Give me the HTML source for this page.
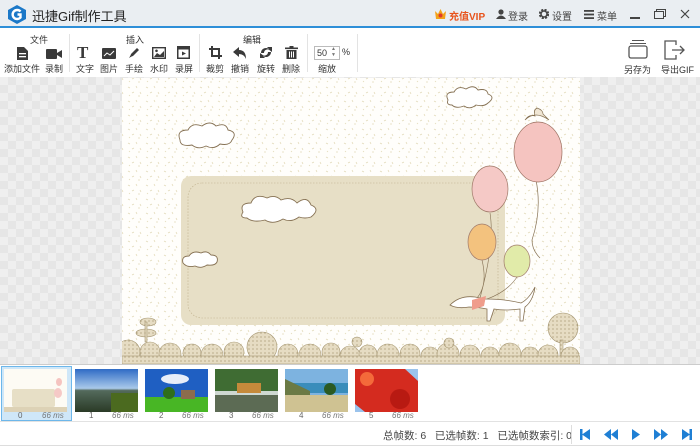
<!DOCTYPE html>
<html><head><meta charset="utf-8"><style>
*{margin:0;padding:0;box-sizing:border-box}
body{width:700px;height:446px;overflow:hidden;font-family:"Liberation Sans","Noto Sans CJK SC",sans-serif;font-size:10px;color:#333;background:#fff;position:relative}
.abs{position:absolute}
.title{left:0;top:0;width:700px;height:28px;background:#eaeef2;border-bottom:2px solid #2e8fd8}
.tb{top:30px;left:0;width:700px;height:47px;background:#fff}
.lbl{position:absolute;font-size:9px;color:#333;white-space:nowrap}
.ico{position:absolute}
.sep{position:absolute;top:34px;width:1px;height:38px;background:#e3e3e3}
.canvas{left:0;top:77px;width:700px;height:287px;background-color:#efefef;background-image:linear-gradient(45deg,#e6e6e6 25%,transparent 25%,transparent 75%,#e6e6e6 75%),linear-gradient(45deg,#e6e6e6 25%,transparent 25%,transparent 75%,#e6e6e6 75%);background-size:16px 16px;background-position:0 0,8px 8px}
.film{left:0;top:364px;width:700px;height:58px;background:#fff;border-top:1px solid #ccc;border-bottom:1px solid #e2e2e2}
.th{position:absolute;top:4px;width:63px;height:43px}
.fn{position:absolute;top:46px;font-size:8px;color:#666}
.fm{position:absolute;top:46px;font-size:8px;color:#777;font-style:italic}
.status{left:0;top:423px;width:700px;height:23px;background:#fff;border-bottom:1px solid #ddd}
</style></head><body>
<div class="abs title">
 <svg class="abs" style="left:8px;top:5px" width="18" height="19" viewBox="0 0 18 19"><polygon points="9,0 18,5 18,14 9,19 0,14 0,5" fill="#1b78c8"/><path d="M12.5 6.5 A4.5 4.5 0 1 0 12.5 12.5 L12.5 9.5 L9.5 9.5" fill="none" stroke="#fff" stroke-width="2.4"/></svg>
 <div class="abs" style="left:32px;top:6px;font-size:13px;color:#222">迅捷Gif制作工具</div>
 <svg class="abs" style="left:434px;top:8px" width="13" height="12" viewBox="0 0 13 12"><path d="M1 3 L4 6 L6.5 1 L9 6 L12 3 L11 11 H2 Z" fill="#f3a21a"/><circle cx="6.5" cy="7.5" r="2" fill="#e03a2a"/></svg>
 <div class="abs" style="left:449px;top:8px;font-size:10px;color:#e8521b;font-weight:bold">充值VIP</div>
 <svg class="abs" style="left:496px;top:9px" width="10" height="10"><circle cx="5" cy="3" r="2.6" fill="#444"/><path d="M0 10 Q5 3 10 10Z" fill="#444"/></svg>
 <div class="abs" style="left:508px;top:8px;font-size:10px;color:#444">登录</div>
 <svg class="abs" style="left:539px;top:9px" width="10" height="10" viewBox="0 0 10 10"><circle cx="5" cy="5" r="4" fill="none" stroke="#444" stroke-width="2.4" stroke-dasharray="2 1.2"/><circle cx="5" cy="5" r="3" fill="none" stroke="#444" stroke-width="1.5"/></svg>
 <div class="abs" style="left:552px;top:8px;font-size:10px;color:#444">设置</div>
 <svg class="abs" style="left:584px;top:10px" width="10" height="9"><rect y="0" width="10" height="1.8" fill="#444"/><rect y="3.6" width="10" height="1.8" fill="#444"/><rect y="7.2" width="10" height="1.8" fill="#444"/></svg>
 <div class="abs" style="left:597px;top:8px;font-size:10px;color:#444">菜单</div>
 <div class="abs" style="left:630px;top:17px;width:10px;height:1.5px;background:#444"></div>
 <svg class="abs" style="left:654px;top:9px" width="12" height="10"><rect x="0.5" y="2.5" width="9" height="7" fill="none" stroke="#444"/><path d="M2.5 2.5V0.5H11.5V7.5H9.5" fill="none" stroke="#444"/></svg>
 <svg class="abs" style="left:680px;top:9px" width="10" height="10"><path d="M1 1L9 9M9 1L1 9" stroke="#444" stroke-width="1.2"/></svg>
</div>
<div class="abs tb"></div>
<div class="lbl" style="left:30px;top:33px">文件</div>
<div class="lbl" style="left:126px;top:33px">插入</div>
<div class="lbl" style="left:243px;top:33px">编辑</div>
<div class="sep" style="left:69px"></div><div class="sep" style="left:199px"></div><div class="sep" style="left:307px"></div><div class="sep" style="left:357px"></div>
<svg class="ico" style="left:17px;top:47px" width="11" height="13"><path d="M0 0H7L11 4V13H0Z" fill="#3a3a3a"/><rect x="2" y="6" width="7" height="1.3" fill="#fff"/><rect x="2" y="9" width="7" height="1.3" fill="#fff"/></svg>
<svg class="ico" style="left:46px;top:49px" width="16" height="10"><rect width="11" height="10" rx="1" fill="#3a3a3a"/><path d="M11 4L16 1V9L11 6Z" fill="#3a3a3a"/></svg>
<div class="abs" style="left:77px;top:43px;font-family:'Liberation Serif',serif;font-size:17px;font-weight:bold;color:#3a3a3a">T</div>
<svg class="ico" style="left:102px;top:48px" width="14" height="11"><rect width="14" height="11" rx="1" fill="#3a3a3a"/><path d="M2 8L5 5L8 7L12 3" stroke="#fff" fill="none"/></svg>
<svg class="ico" style="left:128px;top:46px" width="13" height="13"><path d="M2 11L3 8L9 2L11 4L5 10Z" fill="#3a3a3a"/><path d="M1 12L2.5 9.5L3.5 10.5Z" fill="#3a3a3a"/></svg>
<svg class="ico" style="left:152px;top:47px" width="14" height="12"><rect x="0.7" y="0.7" width="12.6" height="10.6" fill="none" stroke="#3a3a3a" stroke-width="1.4"/><path d="M2 10L5 6L8 8L12 4V10Z" fill="#3a3a3a"/><circle cx="4.5" cy="3.8" r="1.3" fill="#3a3a3a"/></svg>
<svg class="ico" style="left:177px;top:46px" width="13" height="13"><rect width="13" height="13" fill="#3a3a3a"/><rect x="1.5" y="3.5" width="10" height="8" fill="#fff"/><path d="M5 5.5L9 7.5L5 9.5Z" fill="#3a3a3a"/></svg>
<svg class="ico" style="left:209px;top:46px" width="13" height="13"><path d="M3 0V10H13M0 3H10V13" fill="none" stroke="#3a3a3a" stroke-width="2"/></svg>
<svg class="ico" style="left:233px;top:47px" width="14" height="12"><path d="M6 0L0 5L6 10V7Q11 7 13 12Q13 3 6 3Z" fill="#3a3a3a"/></svg>
<svg class="ico" style="left:259px;top:46px" width="14" height="13"><path d="M2 7A5 5 0 0 1 10 3L8 1H13V6L11 4.5A3.5 3.5 0 0 0 5 7Z" fill="#3a3a3a"/><path d="M12 6A5 5 0 0 1 4 10L6 12H1V7L3 8.5A3.5 3.5 0 0 0 9 6Z" fill="#3a3a3a"/></svg>
<svg class="ico" style="left:285px;top:46px" width="13" height="13"><rect x="0" y="1.5" width="13" height="1.6" fill="#3a3a3a"/><rect x="4.5" y="0" width="4" height="2" fill="#3a3a3a"/><path d="M1.5 4H11.5V13H1.5Z" fill="#3a3a3a"/><path d="M4.5 5.5V11.5M6.5 5.5V11.5M8.5 5.5V11.5" stroke="#fff"/></svg>
<div class="abs" style="left:314px;top:46px;width:26px;height:14px;border:1px solid #bbb;font-size:9px;padding:1px 0 0 2px">50</div>
<div class="abs" style="left:331px;top:46px;font-size:5px;color:#777;line-height:6px">▲<br>▼</div>
<div class="lbl" style="left:342px;top:47px">%</div>
<div class="lbl" style="left:4px;top:62px">添加文件</div><div class="lbl" style="left:45px;top:62px">录制</div>
<div class="lbl" style="left:76px;top:62px">文字</div><div class="lbl" style="left:100px;top:62px">图片</div><div class="lbl" style="left:125px;top:62px">手绘</div><div class="lbl" style="left:150px;top:62px">水印</div><div class="lbl" style="left:175px;top:62px">录屏</div>
<div class="lbl" style="left:206px;top:62px">裁剪</div><div class="lbl" style="left:231px;top:62px">撤销</div><div class="lbl" style="left:257px;top:62px">旋转</div><div class="lbl" style="left:282px;top:62px">删除</div><div class="lbl" style="left:318px;top:62px">缩放</div>
<svg class="ico" style="left:628px;top:39px" width="20" height="20"><path d="M4 1.5H16M2 4.5H18" stroke="#555"/><rect x="1" y="7" width="18" height="12" rx="2" fill="none" stroke="#555" stroke-width="1.3"/></svg>
<svg class="ico" style="left:664px;top:40px" width="22" height="20"><path d="M12 5V1H1V19H12V15" fill="none" stroke="#555" stroke-width="1.3"/><path d="M8 10H20M16 6L20 10L16 14" fill="none" stroke="#555" stroke-width="1.3"/></svg>
<div class="lbl" style="left:624px;top:63px">另存为</div><div class="lbl" style="left:661px;top:63px">导出GIF</div>
<div class="abs canvas"></div>
<svg class="abs" style="left:122px;top:78px" width="458" height="286" viewBox="122 78 458 286">
 <defs><pattern id="sp" width="18" height="14" patternUnits="userSpaceOnUse"><path d="M2 3l2 1M10 2l1 2M6 9l2-1M14 8l1 2M3 12l1-1M12 12l2 0" stroke="#e2d9b8" stroke-width="0.8"/></pattern>
 <pattern id="tr" width="4" height="4" patternUnits="userSpaceOnUse"><rect width="4" height="4" fill="#e6dcc3"/><circle cx="1" cy="1" r="0.6" fill="#9c8c66"/></pattern></defs>
 <rect x="122" y="78" width="458" height="286" fill="#fffefb"/>
 <rect x="122" y="78" width="458" height="286" fill="url(#sp)"/>
 <rect x="181" y="176" width="324" height="149" rx="10" fill="#e7dfc6"/>
 <rect x="188" y="183" width="310" height="135" rx="14" fill="none" stroke="#bfb08c" stroke-width="0.6" stroke-dasharray="1.5 1.5"/>
 <g fill="#fff" stroke="#857052" stroke-width="0.9">
  <path d="M180 140q-4-10 8-10q4-8 14-4q8-6 14 0q10-4 12 4q10 2 4 10q-2 6-12 4q-6 6-14 2q-8 4-14-1q-12 2-12-5z"/>
  <path d="M448 100q-4-8 6-8q4-7 12-3q8-5 12 1q9-2 10 4q8 3 0 9q-4 4-12 2q-6 5-12 1q-8 3-12-1q-6 0-4-5z"/>
  <path d="M243 212q-4-9 8-9q4-10 16-5q8-4 14 2q10-4 16 3q10-8 14 2q10 4 0 12q-6 2-12 0q-8 6-16 2q-10 6-18 1q-12 3-18-2q-8 0-4-6z"/>
  <path d="M183 263q-2-7 6-7q4-6 12-3q6-3 10 2q8 0 6 7q-2 4-10 3q-6 4-12 1q-8 2-12-3z"/>
 </g>
 <path d="M536 180q6 30-4 60q0 10 8 18" fill="none" stroke="#857052" stroke-width="0.7"/>
 <ellipse cx="538" cy="152" rx="24" ry="30" fill="#f5c4c0" stroke="#9b7060" stroke-width="0.7"/>
 <path d="M525 120q10-10 24 0l-6-6q0-4-6-6q-4 2-2 8q-6-2-10 4z" fill="#f0e6d4" stroke="#857052" stroke-width="0.7"/>
 <path d="M490 213q5 30-10 85M482 260q6 25 -5 38M517 277q-10 15-30 22" fill="none" stroke="#857052" stroke-width="0.6"/>
 <ellipse cx="490" cy="189" rx="18" ry="23" fill="#f5c9c6" stroke="#a07a6a" stroke-width="0.7"/>
 <ellipse cx="482" cy="242" rx="14" ry="18" fill="#f3c27e" stroke="#a07a6a" stroke-width="0.7"/>
 <ellipse cx="517" cy="261" rx="13" ry="16" fill="#e1eba9" stroke="#a07a6a" stroke-width="0.7"/>
 <path d="M450 305q10-10 25-8l10 2q20 0 36 4q8-4 14-16q-2 14-10 20l-2 14h-3l0-12q-15 2-26 0l-4 12h-3l0-12q-10-2-18-2q-12 2-19-2z" fill="#fff" stroke="#857052" stroke-width="0.8"/>
 <path d="M472 300l14-4-2 10-12 4z" fill="#ef9d8c"/>
 <g fill="url(#tr)" stroke="#a59672" stroke-width="0.6">
  <circle cx="563" cy="328" r="15"/>
  <rect x="560" y="340" width="3" height="24"/>
  <ellipse cx="148" cy="322" rx="8" ry="4"/>
  <ellipse cx="146" cy="333" rx="10" ry="4"/>
  <rect x="145" y="322" width="2" height="20"/>
  <circle cx="128" cy="352" r="12"/>
  <circle cx="150" cy="352" r="10"/>
  <circle cx="170" cy="354" r="11"/>
  <circle cx="192" cy="353" r="9"/>
  <circle cx="212" cy="355" r="11"/>
  <circle cx="234" cy="352" r="10"/>
  <circle cx="262" cy="347" r="15"/>
  <circle cx="288" cy="354" r="10"/>
  <circle cx="310" cy="355" r="11"/>
  <circle cx="331" cy="352" r="9"/>
  <circle cx="350" cy="356" r="10"/>
  <circle cx="368" cy="354" r="9"/>
  <circle cx="388" cy="355" r="11"/>
  <circle cx="410" cy="354" r="10"/>
  <circle cx="430" cy="356" r="9"/>
  <circle cx="448" cy="354" r="11"/>
  <circle cx="470" cy="355" r="10"/>
  <circle cx="490" cy="356" r="9"/>
  <circle cx="510" cy="354" r="11"/>
  <circle cx="530" cy="356" r="9"/>
  <circle cx="548" cy="355" r="10"/>
  <circle cx="570" cy="356" r="9"/>
  <circle cx="357" cy="342" r="5"/>
  <circle cx="449" cy="343" r="5"/>
  <rect x="122" y="356" width="458" height="8"/>
 </g>
</svg>
<div class="abs film">
 <div class="abs" style="left:1px;top:1px;width:71px;height:55px;background:#cfe7f8;border:1px solid #6db7ea"></div>
 <svg class="th" style="left:4px" viewBox="0 0 63 43"><rect width="63" height="43" fill="#fdfbf4"/><rect x="8" y="20" width="43" height="18" rx="2" fill="#e7dfc6"/><ellipse cx="54" cy="24" rx="4" ry="5" fill="#f5c9c6"/><ellipse cx="55" cy="13" rx="3" ry="4" fill="#f5c4c0"/><rect y="38" width="63" height="5" fill="#ddd2b6"/></svg>
 <svg class="th" style="left:75px" viewBox="0 0 63 43"><defs><linearGradient id="a" x1="0" y1="0" x2="0" y2="1"><stop offset="0" stop-color="#2f6bc5"/><stop offset=".45" stop-color="#a9c9ea"/><stop offset=".5" stop-color="#546a5c"/><stop offset="1" stop-color="#2a3a26"/></linearGradient></defs><rect width="63" height="43" fill="url(#a)"/><rect x="36" y="24" width="27" height="19" fill="#4b6a1f"/></svg>
 <svg class="th" style="left:145px" viewBox="0 0 63 43"><rect width="63" height="30" fill="#1f5fc2"/><ellipse cx="30" cy="10" rx="14" ry="5" fill="#e8eef8"/><rect y="28" width="63" height="15" fill="#48b625"/><circle cx="24" cy="24" r="6" fill="#2f6e1a"/><rect x="36" y="21" width="14" height="9" fill="#8c6c4c"/></svg>
 <svg class="th" style="left:215px" viewBox="0 0 63 43"><rect width="63" height="43" fill="#cfd8d2"/><rect y="0" width="63" height="22" fill="#3f6c33"/><rect x="22" y="14" width="24" height="10" fill="#c58a3b"/><rect y="26" width="63" height="17" fill="#5c6b54"/></svg>
 <svg class="th" style="left:285px" viewBox="0 0 63 43"><rect width="63" height="43" fill="#7db3e0"/><rect y="14" width="63" height="10" fill="#3a8dbb"/><path d="M0 10L25 22V43H0Z" fill="#6b7a45"/><rect y="26" width="63" height="17" fill="#cfc292"/><circle cx="45" cy="20" r="6" fill="#2b5a23"/></svg>
 <svg class="th" style="left:355px" viewBox="0 0 63 43"><rect width="63" height="43" fill="#d42b1f"/><circle cx="12" cy="10" r="7" fill="#f46a3a"/><circle cx="45" cy="30" r="10" fill="#b81a12"/><path d="M50 0h13v12z" fill="#9bc3ec"/><path d="M0 35l10 8H0z" fill="#9bc3ec"/></svg>
 <div class="fn" style="left:18px">0</div><div class="fm" style="left:42px">66 ms</div>
 <div class="fn" style="left:89px">1</div><div class="fm" style="left:112px">66 ms</div>
 <div class="fn" style="left:159px">2</div><div class="fm" style="left:182px">66 ms</div>
 <div class="fn" style="left:229px">3</div><div class="fm" style="left:252px">66 ms</div>
 <div class="fn" style="left:299px">4</div><div class="fm" style="left:322px">66 ms</div>
 <div class="fn" style="left:369px">5</div><div class="fm" style="left:392px">66 ms</div>
</div>
<div class="abs status">
 <div class="abs" style="left:383px;top:5px;font-size:10.5px;color:#444;white-space:nowrap">总帧数: 6&nbsp;&nbsp; 已选帧数: 1&nbsp;&nbsp; 已选帧数索引: 0</div>
 <div class="abs" style="left:571px;top:2px;width:1px;height:19px;background:#ddd"></div>
 <svg class="abs" style="left:580px;top:5px" width="116" height="13" fill="#1f7fd4"><rect x="0" y="1" width="2.5" height="11"/><path d="M2 6.5L10 1V12Z"/><path d="M24 6.5L31 1V12ZM31 6.5L38 1V12Z"/><path d="M52 1L60 6.5L52 12Z"/><path d="M74 1L81 6.5L74 12ZM81 1L88 6.5L81 12Z"/><path d="M102 1L110 6.5L102 12Z"/><rect x="109.5" y="1" width="2.5" height="11"/></svg>
</div>
</body></html>
